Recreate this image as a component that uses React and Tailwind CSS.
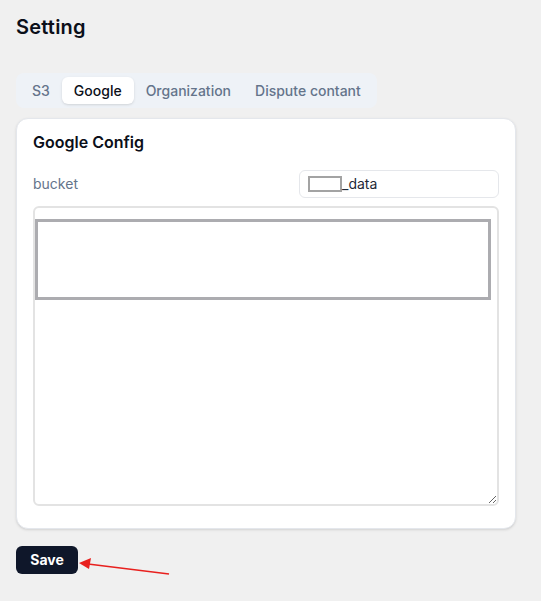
import React, { useState } from "react";

const tabs = ["S3", "Google", "Organization", "Dispute contant"];

const App = () => {
    const [active, setActive] = useState("Google");

    return (
        <div
            className="relative min-h-screen bg-[#f0f0f0] px-4 pt-[13px]"
            style={{ fontFamily: "Inter, 'Noto Sans', sans-serif" }}
        >
            <h1 className="text-xl font-semibold leading-7 tracking-[0.01em] text-[#0b0f19]">
                Setting
            </h1>

            {/* Tabs */}
            <div className="mt-8 flex h-[35px] w-[361px] items-center rounded-lg bg-[#eef2f7] p-1">
                {tabs.map((tab) => (
                    <button
                        key={tab}
                        onClick={() => setActive(tab)}
                        className={
                            tab === active
                                ? "h-[27px] rounded-md bg-white px-3 text-sm font-medium text-[#0b0f19] shadow-sm"
                                : "h-[27px] rounded-md px-3 text-sm font-medium text-[#64748b]"
                        }
                    >
                        {tab}
                    </button>
                ))}
            </div>

            {/* Google config card */}
            <div className="mt-[10px] w-[500px] rounded-xl border border-[#e4e7ec] bg-white px-4 pb-[22px] pt-[11px] shadow-sm">
                <h2 className="text-base font-semibold leading-6 text-[#0b0f19]">
                    Google Config
                </h2>

                <div className="mt-4 flex items-center justify-between">
                    <label className="text-sm text-[#64748b]">bucket</label>
                    <div className="flex h-7 w-[200px] items-center rounded-md border border-[#e5e7eb] bg-white px-2 text-sm text-[#1f2937]">
                        <span className="h-4 w-[34px] border-2 border-[#a3a3a3]" />
                        <span>_data</span>
                    </div>
                </div>

                <div className="relative mt-2">
                    <textarea
                        className="block h-[300px] w-full rounded-md border-2 border-[#e3e3e3] bg-white outline-none"
                        defaultValue=""
                    />
                    <div className="pointer-events-none absolute left-[2px] top-[13px] h-[81px] w-[456px] border-[3px] border-[#acacb0]" />
                </div>
            </div>

            <button className="mt-[17px] h-7 w-[62px] rounded-md bg-[#0f172a] text-sm font-bold text-white">
                Save
            </button>

            {/* annotation arrow */}
            <svg
                className="pointer-events-none absolute left-0 top-0"
                width="541"
                height="601"
            >
                <line
                    x1="169"
                    y1="574"
                    x2="88"
                    y2="564"
                    stroke="#e8201e"
                    strokeWidth="1.6"
                />
                <polygon points="79,563 91,558 89,569" fill="#e8201e" />
            </svg>
        </div>
    );
};

export default App;
